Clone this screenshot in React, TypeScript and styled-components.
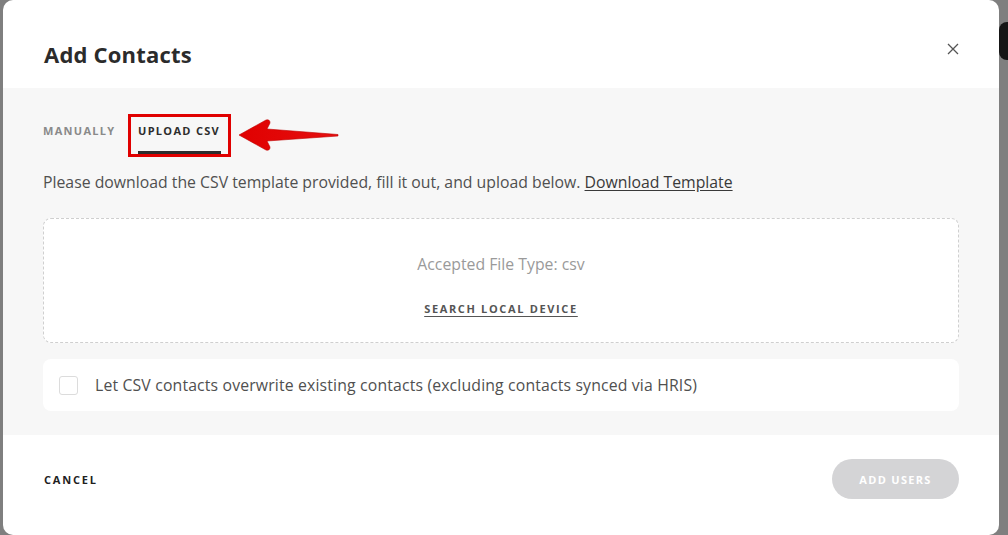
import React from "react";
import styled, { createGlobalStyle } from "styled-components";

const Global = createGlobalStyle`
  html, body { margin: 0; padding: 0; height: 100%; }
  body { background: #7f7f7f; font-family: "Open Sans", "Liberation Sans", sans-serif; overflow: hidden; }
  #root { height: 100%; }
`;

const Backdrop = styled.div`
  display: flex;
  height: 535px;
  width: 1008px;
  padding-left: 3px;
  box-sizing: border-box;
`;

const Modal = styled.div`
  width: 996px;
  height: 535px;
  background: #fff;
  border-radius: 10px;
  display: flex;
  flex-direction: column;
  overflow: hidden;
`;

const SideStrip = styled.div`
  flex: 1;
  padding-top: 22px;
`;

const DarkPill = styled.div`
  height: 38px;
  background: #161616;
  border-radius: 8px 0 0 8px;
`;

const Header = styled.div`
  height: 88px;
  display: flex;
  align-items: center;
  justify-content: space-between;
  padding: 20px 36px 0 41px;
  box-sizing: border-box;
`;

const Title = styled.h1`
  margin: 0;
  font-size: 22px;
  font-weight: 700;
  color: #2b2b2b;
  letter-spacing: 0.2px;
`;

const CloseButton = styled.button`
  border: none;
  background: none;
  padding: 0;
  width: 20px;
  height: 20px;
  margin-top: -10px;
  display: flex;
  align-items: center;
  justify-content: center;
  cursor: pointer;
`;

const Body = styled.div`
  background: #f7f7f7;
  height: 347px;
  padding: 0 40px;
  box-sizing: border-box;
  display: flex;
  flex-direction: column;
`;

const TabRow = styled.div`
  display: flex;
  align-items: flex-start;
  margin-top: 26px;
  height: 43px;
  position: relative;
`;

const Tab = styled.div`
  font-size: 11px;
  font-weight: 700;
  letter-spacing: 1.3px;
  color: #8a8a8a;
  padding-top: 9px;
  margin-right: 24px;
`;

const ActiveTabBox = styled.div`
  margin-left: -12px;
  border: 3px solid #e00000;
  width: 103px;
  height: 43px;
  box-sizing: border-box;
  display: flex;
  justify-content: center;
`;

const ActiveTabInner = styled.div`
  font-size: 11px;
  font-weight: 700;
  letter-spacing: 1.3px;
  color: #2d2d2d;
  padding-top: 6px;
  height: 37px;
  box-sizing: border-box;
  border-bottom: 3px solid #2d2d2d;
  width: 83px;
  text-align: center;
`;

const Arrow = styled.svg`
  position: absolute;
  left: 193px;
  top: 0px;
`;

const Description = styled.p`
  margin: 14px 0 0 0;
  font-size: 15.8px;
  color: #505050;
`;

const Link = styled.a`
  color: #3a3a3a;
  text-decoration: underline;
  text-underline-offset: 2px;
`;

const DropZone = styled.div`
  margin-top: 25px;
  height: 125px;
  border: 1px dashed #cfcfcf;
  border-radius: 8px;
  background: #fff;
  display: flex;
  flex-direction: column;
  align-items: center;
  box-sizing: border-box;
`;

const Accepted = styled.div`
  margin-top: 34px;
  font-size: 15.8px;
  color: #9a9a9a;
`;

const SearchLink = styled.a`
  margin-top: 26px;
  font-size: 11px;
  font-weight: 700;
  letter-spacing: 1.65px;
  color: #555;
  text-decoration: underline;
  text-underline-offset: 3px;
`;

const CheckRow = styled.label`
  margin-top: 16px;
  height: 52px;
  background: #fff;
  border-radius: 8px;
  display: flex;
  align-items: center;
  padding-left: 16px;
  gap: 17px;
`;

const CheckBox = styled.span`
  width: 19px;
  height: 19px;
  border: 1px solid #dcdcdc;
  border-radius: 3px;
  box-sizing: border-box;
  background: #fff;
`;

const CheckText = styled.span`
  font-size: 15.8px;
  letter-spacing: 0.15px;
  color: #505050;
`;

const Footer = styled.div`
  flex: 1;
  display: flex;
  align-items: center;
  justify-content: space-between;
  padding: 0 40px 12px 41px;
`;

const CancelButton = styled.button`
  border: none;
  background: none;
  padding: 0;
  font-family: inherit;
  font-size: 11px;
  font-weight: 700;
  letter-spacing: 1.8px;
  color: #1f1f1f;
`;

const PrimaryButton = styled.button`
  border: none;
  width: 127px;
  height: 40px;
  border-radius: 20px;
  background: #d4d4d6;
  color: #fff;
  font-family: inherit;
  font-size: 11px;
  font-weight: 700;
  letter-spacing: 1.3px;
`;

export default function App() {
  return (
    <>
      <Global />
      <Backdrop>
        <Modal>
          <Header>
            <Title>Add Contacts</Title>
            <CloseButton aria-label="Close">
              <svg width="12" height="12" viewBox="0 0 12 12">
                <path d="M1 1 L11 11 M11 1 L1 11" stroke="#555" strokeWidth="1.3" />
              </svg>
            </CloseButton>
          </Header>
          <Body>
            <TabRow>
              <Tab>MANUALLY</Tab>
              <ActiveTabBox>
                <ActiveTabInner>UPLOAD CSV</ActiveTabInner>
              </ActiveTabBox>
              <Arrow width="104" height="40" viewBox="0 0 104 40">
                <defs>
                  <linearGradient id="ag" x1="0" y1="0" x2="1" y2="0">
                    <stop offset="0" stopColor="#e00000" />
                    <stop offset="1" stopColor="#e51010" />
                  </linearGradient>
                </defs>
                <path
                  d="M3 21 L30 6 Q34 5 34 9 L31 15 L102 20.5 L102 22 L31 27 L34 33 Q34 37 30 36 Z"
                  fill="url(#ag)"
                  stroke="#c00000"
                  strokeWidth="0.6"
                  strokeLinejoin="round"
                />
              </Arrow>
            </TabRow>
            <Description>
              Please download the CSV template provided, fill it out, and upload below.{" "}
              <Link>Download Template</Link>
            </Description>
            <DropZone>
              <Accepted>Accepted File Type: csv</Accepted>
              <SearchLink>SEARCH LOCAL DEVICE</SearchLink>
            </DropZone>
            <CheckRow>
              <CheckBox />
              <CheckText>
                Let CSV contacts overwrite existing contacts (excluding contacts synced via HRIS)
              </CheckText>
            </CheckRow>
          </Body>
          <Footer>
            <CancelButton>CANCEL</CancelButton>
            <PrimaryButton>ADD USERS</PrimaryButton>
          </Footer>
        </Modal>
        <SideStrip>
          <DarkPill />
        </SideStrip>
      </Backdrop>
    </>
  );
}
